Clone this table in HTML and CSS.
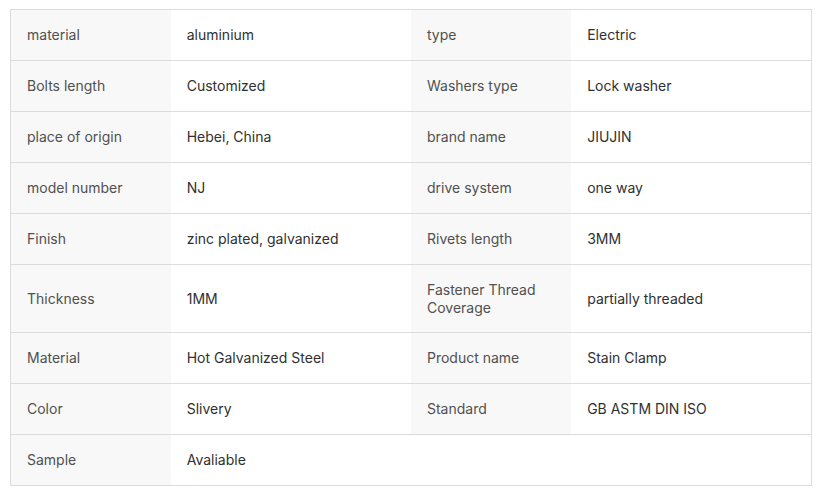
FILE: index.html
```html
<!DOCTYPE html>
<html>
<head>
<meta charset="utf-8">
<link rel="stylesheet" href="styles.css">
</head>
<body>
<div class="wrap">
<table class="spec">
<colgroup><col class="c-l"><col class="c-v"><col class="c-l"><col class="c-v"></colgroup>
<tbody>
<tr><td class="k">material</td><td class="v">aluminium</td><td class="k">type</td><td class="v">Electric</td></tr>
<tr><td class="k">Bolts length</td><td class="v">Customized</td><td class="k">Washers type</td><td class="v">Lock washer</td></tr>
<tr><td class="k">place of origin</td><td class="v">Hebei, China</td><td class="k">brand name</td><td class="v">JIUJIN</td></tr>
<tr><td class="k">model number</td><td class="v">NJ</td><td class="k">drive system</td><td class="v">one way</td></tr>
<tr><td class="k">Finish</td><td class="v">zinc plated, galvanized</td><td class="k">Rivets length</td><td class="v">3MM</td></tr>
<tr><td class="k">Thickness</td><td class="v">1MM</td><td class="k">Fastener Thread Coverage</td><td class="v">partially threaded</td></tr>
<tr><td class="k">Material</td><td class="v">Hot Galvanized Steel</td><td class="k">Product name</td><td class="v">Stain Clamp</td></tr>
<tr><td class="k">Color</td><td class="v">Slivery</td><td class="k">Standard</td><td class="v">GB ASTM DIN ISO</td></tr>
<tr><td class="k">Sample</td><td class="v" colspan="3">Avaliable</td></tr>
</tbody>
</table>
</div>
</body>
</html>
```

FILE: styles.css
```css
html, body { margin: 0; padding: 0; background: #fff; }
.wrap { padding: 9px 0 0 10px; }
.spec {
  border-collapse: collapse;
  table-layout: fixed;
  width: 802px;
  border: 1px solid #dcdcdc;
  font-family: Inter, "Noto Sans", sans-serif;
  font-size: 14px;
  line-height: 17.5px;
}
.c-l { width: 160px; }
.c-v { width: 240px; }
.spec tr { height: 51px; }
.spec td {
  padding: 16px 16px;
  border-bottom: 1px solid #dcdcdc;
  vertical-align: middle;
  text-align: left;
}
.spec td.k { background: #f8f8f8; color: #505050; }
.spec td.v { background: #fff; color: #303030; }
```
